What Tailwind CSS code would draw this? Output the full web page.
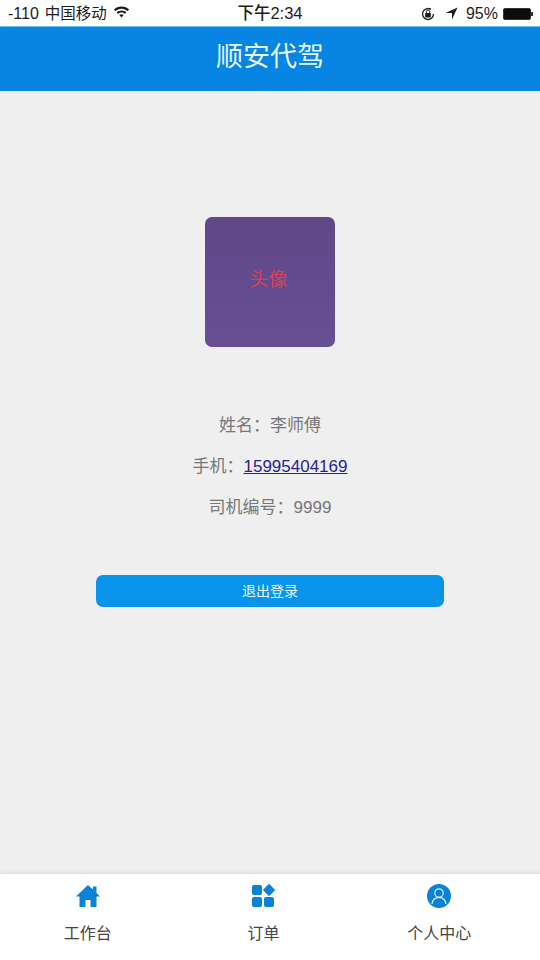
<!DOCTYPE html>
<html lang="zh">
<head>
    <meta charset="UTF-8">
    <meta name="viewport" content="width=device-width, initial-scale=1.0">
    <title>顺安代驾</title>
    <script src="https://cdn.jsdelivr.net/npm/@tailwindcss/browser@4"></script>
</head>
<body class="font-['Liberation_Sans','Noto_Sans_CJK_SC',sans-serif]">
    <div class="flex flex-col w-[540px] h-[960px] bg-[#efeff0] overflow-hidden">
        <!-- status bar -->
        <div class="flex items-center justify-between h-[26px] px-2 pt-px bg-white text-[#1c1c1c] text-[16px] shrink-0">
            <div class="flex items-center w-[190px]">
                <span>-110</span>
                <span class="ml-[6px] text-[15.5px]">中国移动</span>
                <svg class="ml-[6px] -mt-[3px]" width="17" height="12" viewBox="0 0 16 12" fill="#1c1c1c">
                    <path d="M8 .5C5 .5 2.400 1.600.4 3.500l1.500 1.600C3.500 3.600 5.600 2.700 8 2.700s4.500.9 6.100 2.400l1.500-1.600C13.600 1.600 11 .5 8 .5z"/>
                    <path d="M8 4.400c-1.900 0-3.600.7-4.900 1.900l1.500 1.600C5.500 7 6.700 6.600 8 6.600s2.500.4 3.400 1.300l1.500-1.600C11.600 5.100 9.900 4.400 8 4.400z"/>
                    <path d="M8 8.200c-.9 0-1.600.3-2.200.9L8 11.500l2.200-2.400c-.6-.6-1.300-.9-2.200-.9z"/>
                </svg>
            </div>
            <span class="font-medium text-[16.5px]">下午2:34</span>
            <div class="flex items-center justify-end w-[190px]">
                <svg width="16" height="16" viewBox="0 0 16 16" fill="none" stroke="#1c1c1c" stroke-width="1.300">
                    <path d="M13.500 8A5.500 5.500 0 1 1 11 3.400"/>
                    <rect x="5.200" y="7" width="5.600" height="4.400" rx=".6" fill="#1c1c1c" stroke="none"/>
                    <path d="M6.300 7V5.800a1.700 1.700 0 0 1 3.400 0V7" stroke-width="1"/>
                </svg>
                <svg class="ml-[9px]" width="13" height="13" viewBox="0 0 13 13" fill="#1c1c1c">
                    <path d="M12.500.5 7 12.500V6H.5z"/>
                </svg>
                <span class="ml-[8px] mr-px">95%</span>
                <div class="flex items-center ml-[4px] mr-[-1px]">
                    <div class="w-[28px] h-[12px] bg-[#0c0c0c] border border-[#333] rounded-[2px]"></div>
                    <div class="w-[2px] h-[4px] bg-[#333]"></div>
                </div>
            </div>
        </div>

        <!-- header -->
        <div class="flex items-center justify-center h-[65px] pb-[3px] bg-[#0884e2] border-t border-[#6cc3f0] text-[#e4f6ff] text-[27px] shrink-0">顺安代驾</div>

        <!-- profile -->
        <div class="flex flex-col items-center flex-1 pt-[126px]">
            <div class="flex items-center justify-center w-[130px] h-[130px] pb-[4px] pr-[3px] rounded-[7px] bg-linear-to-b from-[#5f4788] to-[#674f93] text-[#d8434f] text-[19px]">头像</div>
            <div class="flex flex-col items-center gap-[17px] mt-[65px] text-[#777] text-[17px] leading-[24px]">
                <p class="h-[24px]">姓名<span class="font-['Noto_Sans_CJK_TC']">：</span>李师傅</p>
                <p class="h-[24px]">手机<span class="font-['Noto_Sans_CJK_TC']">：</span><a href="#" class="text-[#27248f] underline">15995404169</a></p>
                <p class="h-[24px]">司机编号<span class="font-['Noto_Sans_CJK_TC']">：</span>9999</p>
            </div>
            <button class="w-[348px] h-[32px] mt-[57px] rounded-[7px] bg-[#0994ec] text-[#eef8ff] text-[14px]">退出登录</button>
        </div>

        <!-- tab bar -->
        <div class="grid grid-cols-3 h-[87px] pr-[13px] bg-white border-t border-[#dedede] shadow-[0_-1px_3px_rgba(0,0,0,0.06)] shrink-0 text-[#444] text-[16px]">
            <div class="flex flex-col items-center">
                <svg class="mt-[9px]" width="26" height="26" viewBox="0 0 26 26" fill="#0a82d8">
                    <path d="M13 2 1 13.500h3.500V24h6v-7h5v7h6V13.500H25l-3.500-3.400V3.500h-3.500v2.700L15.500 4.500z"/>
                </svg>
                <span class="mt-[13px]">工作台</span>
            </div>
            <div class="flex flex-col items-center">
                <svg class="mt-[9px]" width="26" height="26" viewBox="0 0 26 26" fill="#0a82d8">
                    <rect x="2" y="2" width="10" height="10" rx="2"/>
                    <rect x="14" y="14" width="10" height="10" rx="2"/>
                    <rect x="2" y="14" width="10" height="10" rx="2"/>
                    <path d="M19 .8 25.200 7 19 13.200 12.800 7z"/>
                </svg>
                <span class="mt-[13px]">订单</span>
            </div>
            <div class="flex flex-col items-center">
                <svg class="mt-[9px]" width="26" height="26" viewBox="0 0 26 26" fill="none" stroke="#cfeaff" stroke-width="1.300">
                    <circle cx="13" cy="13" r="12" fill="#0a82d8" stroke="none"/>
                    <circle cx="13" cy="10" r="4.200"/>
                    <path d="M6 21c.6-4 3.400-6.500 7-6.500s6.400 2.500 7 6.500"/>
                </svg>
                <span class="mt-[13px]">个人中心</span>
            </div>
        </div>
    </div>
</body>
</html>
